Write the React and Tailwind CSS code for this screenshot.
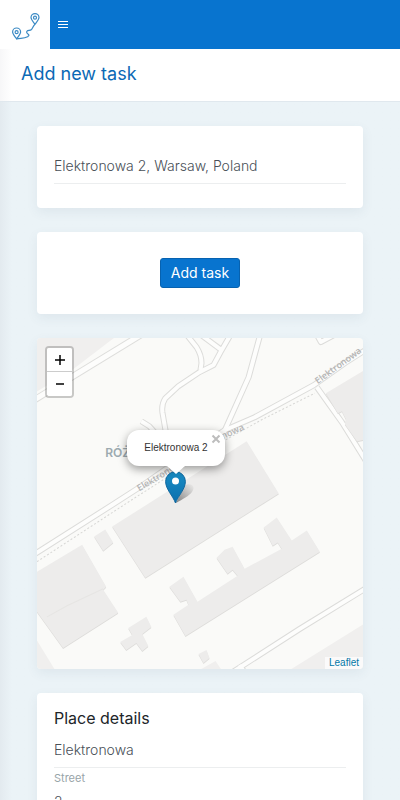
const roads = [
  'M30 558 L112 506 L143 486 L180 460 L225 431 L255 418 L314 386 L345 364 L370 348',
  'M261 334 L249 378 L223 436',
  'M317 388 L342 423 L368 465',
  'M185 333 L197 348 Q202 356 202 364 L201 371',
  'M232 334 L221 353 L214 366 L200 373 L179 387 L166 399 Q162 405 163 413 L167 436',
  'M199 334 L222 351',
  'M142 422 L150 427 L158 436',
  'M316 334 L321 343 L338 334',
  'M230 674 L300 629 L370 586',
  'M240 665 L246 674',
];

const buildings = [
  '113,527 247,442 279,494 146,578',
  '38,572 83,545 107,587 104,590 119,613 64,648 38,612',
  '95,537 106,530 114,543 104,551',
  '129,628 147,617 152,627 143,634 149,646 143,651 137,643 127,650 121,642 133,635',
  '170,587 184,577 198,602 238,576 233,570 228,574 217,558 225,550 233,547 245,569 282,549 278,543 273,546 264,528 277,518 292,541 307,531 320,552 186,636 174,615 189,605 187,600 181,602',
  '326,394 366,370 366,440 357,442 345,425 346,420 342,412 338,414',
  '199,654 207,650 210,658 204,663',
];

function RouteLogo() {
  return (
    <svg viewBox="0 0 30 30" className="size-[30px]" fill="none" stroke="#3b8ac4" strokeWidth="1.2">
      <path d="M6.600 28.800C4.500 26 2.600 24 2.600 22a4 4 0 0 1 8 0c0 2-1.900 4-4 6.800Z" />
      <circle cx="6.600" cy="22.200" r="1.500" />
      <path d="M25 14.200C22.900 11.500 21 9.600 21 7.600a4 4 0 0 1 8 0c0 2-1.900 3.900-4 6.600Z" />
      <circle cx="25" cy="7.700" r="1.500" />
      <path d="M6.600 28.800C10 27.800 14 29 17.500 26.800C18.500 26 19.600 25.400 18.500 24.400C17.300 23.600 16 22.500 17 21.200C18 19.800 20 21 21.500 19.500C22.800 18 22.500 17 25 14.200" />
    </svg>
  );
}

function StreetMap() {
  return (
    <svg
      viewBox="38 339 325 330"
      preserveAspectRatio="xMidYMid slice"
      className="size-full"
      aria-hidden="true"
    >
      <rect x="-400" y="300" width="1200" height="420" fill="#fafaf8" />
      <g fill="#f0efee">
        <path d="M37 338H116L73 371L37 393Z" />
        <path d="M364 624L290 670H364Z" />
        <path d="M37 639L56 670H37Z" />
        <path d="M200 670L216 661L222 670Z" />
      </g>
      <g fill="none" strokeLinejoin="round">
        <path d="M30 404L143 335" stroke="#dededc" strokeWidth="7" />
        <path d="M30 404L143 335" stroke="#fdfdfc" strokeWidth="5" />
        {roads.map((d) => (
          <path key={d} d={d} stroke="#dcdcda" strokeWidth="6" />
        ))}
        {roads.map((d) => (
          <path key={d} d={d} stroke="#fdfdfc" strokeWidth="4" />
        ))}
        <path
          d="M38 562L133 500L180 470L227 440L263 420L315 394"
          stroke="#d6d6d4"
          strokeDasharray="2 2"
        />
      </g>
      <g fill="#dddcda" transform="translate(0 1)">
        {buildings.map((points) => (
          <polygon key={points} points={points} />
        ))}
      </g>
      <g fill="#edeceb">
        {buildings.map((points) => (
          <polygon key={points} points={points} />
        ))}
      </g>
      <path d="M48 617L68 606L104 589" fill="none" stroke="#e6e5e3" />
      <g fontFamily="'Open Sans', sans-serif" fontWeight="600" fontSize="9" fill="#b4b4b4">
        <text transform="translate(140 492) rotate(-31)">Elektronowa</text>
        <text x="245" y="430" textAnchor="end" transform="rotate(-25 245 430)">
          Elektronowa
        </text>
        <text transform="translate(318 385) rotate(-36)">Elektronowa</text>
      </g>
      <text x="106" y="458" fontFamily="Inter, sans-serif" fontWeight="600" fontSize="12" fill="#9daab0">
        RÓŻ
      </text>
    </svg>
  );
}

function Marker() {
  return (
    <svg viewBox="0 0 36 33" className="h-[33px] w-9">
      <defs>
        <linearGradient id="pin" x1="0" y1="0" x2="0" y2="1">
          <stop offset="0" stopColor="#1a8dc4" />
          <stop offset="1" stopColor="#0b6fae" />
        </linearGradient>
        <linearGradient id="pinShadow" x1="0" y1="1" x2="1" y2="0">
          <stop offset="0" stopColor="#000" stopOpacity="0.45" />
          <stop offset="1" stopColor="#000" stopOpacity="0" />
        </linearGradient>
      </defs>
      <path d="M11 32L19 15C24 11 32 14 27 21C24 25 18 28 11 32Z" fill="url(#pinShadow)" />
      <path
        d="M10.500 32C8 25 .6 18 .6 10.500a9.900 9.900 0 0 1 19.800 0C20.400 18 13 25 10.500 32Z"
        fill="url(#pin)"
        stroke="#12689e"
      />
      <circle cx="10.500" cy="10" r="3.500" fill="#fff" />
    </svg>
  );
}

function Card({ className = '', children }) {
  return (
    <section className={`rounded bg-white px-[17px] shadow-[0_4px_12px_rgba(60,90,110,0.08)] ${className}`}>
      {children}
    </section>
  );
}

function DetailField({ id, label, value }) {
  return (
    <div className="flex flex-col">
      <input
        id={id}
        defaultValue={value}
        className="h-9 w-full border-b border-[#eceeef] text-sm font-light text-[#495057] outline-none"
      />
      <label htmlFor={id} className="pt-1 text-[11px] leading-3 text-[#98a4a8]">
        {label}
      </label>
    </div>
  );
}

function MapPanel() {
  return (
    <section className="relative h-[331px] overflow-hidden rounded-sm font-['Liberation_Sans',sans-serif] shadow-[0_4px_12px_rgba(60,90,110,0.08)]">
      <StreetMap />
      <div className="absolute top-2 left-2 flex flex-col rounded border-2 border-black/20 bg-clip-padding">
        <button
          type="button"
          aria-label="Zoom in"
          className="flex h-6 w-[25px] items-center justify-center rounded-t-xs border-b border-[#ccc] bg-white"
        >
          <svg viewBox="0 0 10 10" className="size-[10px]" stroke="#000" strokeWidth="1.500">
            <path d="M0 5H10M5 0V10" />
          </svg>
        </button>
        <button
          type="button"
          aria-label="Zoom out"
          className="flex h-6 w-[25px] items-center justify-center rounded-b-xs bg-white"
        >
          <svg viewBox="0 0 10 10" className="size-[10px]" stroke="#000" strokeWidth="1.500">
            <path d="M1 5H9" />
          </svg>
        </button>
      </div>
      <div className="absolute top-[133px] left-[calc(50%-35px)]">
        <Marker />
      </div>
      <div className="absolute top-[92px] left-[calc(50%-73px)] h-9 w-[98px] rounded-xl bg-white shadow-[0_3px_10px_rgba(0,0,0,0.4)]">
        <p className="text-center text-[10px] leading-9 text-[#333]">Elektronowa 2</p>
        <button type="button" aria-label="Close popup" className="absolute top-1 right-1">
          <svg viewBox="0 0 10 10" className="size-[10px]" stroke="#bdbdbd" strokeWidth="2">
            <path d="M1.500 1.500L8.500 8.500M8.500 1.500L1.500 8.500" />
          </svg>
        </button>
        <svg viewBox="0 0 20 10" className="absolute top-full left-[39px] h-[9px] w-5" fill="#fff">
          <path d="M0 0H20L10 9Z" />
        </svg>
      </div>
      <div className="absolute right-0 bottom-0 bg-white/70 px-1 text-[10px] leading-3">
        <a href="#leaflet" className="text-[#0078a8]">
          Leaflet
        </a>
      </div>
    </section>
  );
}

export default function App() {
  return (
    <div className="min-h-screen bg-[#ebf3f7] font-[Inter,sans-serif]">
      <header className="flex h-[49px] items-center bg-[#0874cf]">
        <a href="#home" aria-label="Home" className="flex h-full w-[50px] items-center justify-center bg-white">
          <RouteLogo />
        </a>
        <button type="button" aria-label="Toggle menu" className="ml-2 flex flex-col gap-[2px]">
          <span className="h-px w-[10px] bg-white" />
          <span className="h-px w-[10px] bg-white" />
          <span className="h-px w-[10px] bg-white" />
        </button>
      </header>
      <div className="border-b border-[#e0e8ee] bg-white bg-linear-to-r from-[#f7f7f8] to-white to-[12px] px-[21px] pt-[11px] pb-[13px]">
        <h1 className="text-lg leading-7 text-[#0b69b5]">Add new task</h1>
      </div>
      <main className="flex flex-col gap-6 bg-linear-to-r from-[#e3eaef] to-[#ebf3f7] to-[12px] px-[37px] py-6">
        <Card className="py-6">
          <input
            aria-label="Address"
            defaultValue="Elektronowa 2, Warsaw, Poland"
            className="h-[34px] w-full border-b border-[#eceeef] pb-[2px] text-sm font-light text-[#495057] outline-none"
          />
        </Card>
        <Card className="flex justify-center py-[26px]">
          <button
            type="button"
            className="h-[30px] rounded-[3px] border border-[#0762b0] bg-[#0874cf] px-[10px] text-sm text-white"
          >
            Add task
          </button>
        </Card>
        <MapPanel />
        <Card className="py-[11px]">
          <h2 className="text-base leading-7 text-[#212529]">Place details</h2>
          <DetailField id="street" label="Street" value="Elektronowa" />
          <DetailField id="number" label="Number" value="2" />
        </Card>
      </main>
    </div>
  );
}
